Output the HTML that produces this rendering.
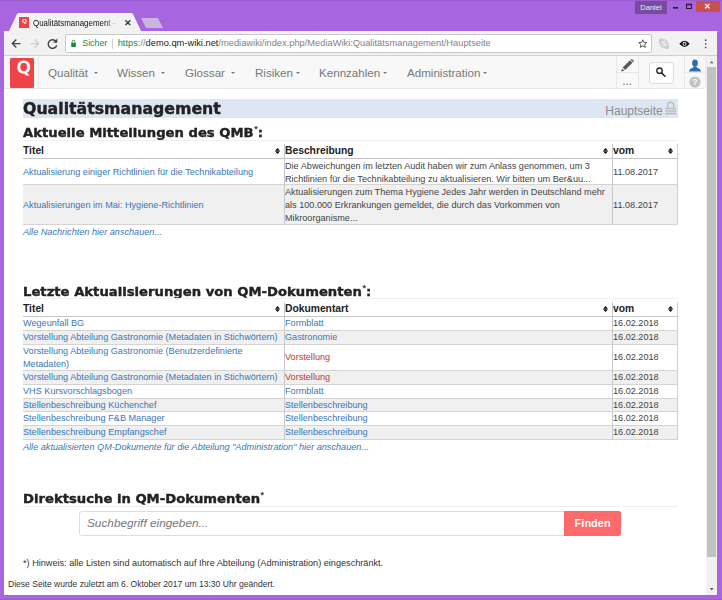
<!DOCTYPE html>
<html lang="de"><head><meta charset="utf-8"><title>Qualitätsmanagement</title>
<style>
*{box-sizing:border-box;margin:0;padding:0}
html,body{width:722px;height:600px;overflow:hidden;background:#a865e0;font-family:"Liberation Sans",sans-serif}
#win,#win>*,#page>*,#pg>*{position:absolute}
#win{position:absolute;left:0;top:0;width:722px;height:600px;background:#a865e0;overflow:hidden}
#topedge{left:0;top:0;width:722px;height:1px;background:#9a5ccf}
#tab{left:0;top:0}
#tabtitle{left:33px;top:16.500px;font-size:9px;color:#111;white-space:nowrap;line-height:12px;width:97px;overflow:hidden;transform:scaleX(0.880);transform-origin:0 50%;-webkit-mask-image:linear-gradient(90deg,#000 85%,transparent 98%)}
#tabx{left:123.500px;top:16px;font-size:8.500px;color:#333;line-height:14px;font-weight:bold}
#user{left:635px;top:1px;width:32px;height:13px;background:#7a4a9e;color:#eee;font-size:7.500px;line-height:13px;text-align:center}
#close{left:696px;top:1px;width:23.500px;height:11px;background:#c9504f;color:#fff;font-size:7.500px;line-height:11.500px;text-align:center;font-weight:bold}
#toolbar{left:4px;top:31px;width:713.300px;height:25px;background:#f2f2f2;border-bottom:1px solid #d0d0d0}
#omni{left:64.500px;top:34px;width:587.500px;height:19px;background:#fff;border:1px solid #c8c8c8;border-radius:2px}
#url{left:82.300px;top:37.300px;font-size:9.300px;line-height:13px;white-space:nowrap;color:#828282;transform-origin:0 50%}
#page{left:4px;top:56px;width:713.300px;height:539px;background:#fff;overflow:hidden}
/* inside page coordinates are relative to window via offset wrapper */
#pg{left:-4px;top:-56px;width:722px;height:600px}
#nav{left:4px;top:56px;width:701.500px;height:33px;border-radius:0 0 3px 0;border-right:1px solid #eee;background:#f8f8f8;border-bottom:1px solid #e7e7e7}
#logo{left:10px;top:58.300px;width:23.700px;height:29.400px;background:#ee4449;border-radius:1.300px}
.ni{top:66px;font-size:11.6px;line-height:14px;color:#777;white-space:nowrap}
.caret{display:inline-block;width:0;height:0;border-left:2.700px solid transparent;border-right:2.700px solid transparent;border-top:2.800px solid #777;vertical-align:middle;margin-left:2.500px;position:relative;top:-1px}
.vd{top:56px;width:1px;height:33px;background:#e7e7e7}
.hd{height:1px;background:#e7e7e7;top:72px}
#sbtn{left:648.500px;top:62px;width:25px;height:22px;background:#fff;border:1px solid #ddd;border-radius:3px}
#h1bar{left:23px;top:99px;width:655px;height:19px;background:#dee6f3}
.hb{font-family:"DejaVu Sans","Liberation Sans",sans-serif;font-weight:bold;color:#222;white-space:nowrap;-webkit-text-stroke:0.4px #222;transform-origin:0 50%}
#h1{left:23px;top:99.500px;font-size:15.3px;line-height:19px;transform:scaleX(1.03)}
.h2{left:23px;font-size:12.8px;line-height:16px;transform:scaleX(1.03)}
.h2 sup{font-size:9px;vertical-align:top;line-height:8px;font-family:"Liberation Sans",sans-serif;font-weight:normal;-webkit-text-stroke:0.15px #222;margin-left:0.500px}
#haupt{left:605.300px;top:104.200px;font-size:12px;line-height:14px;color:#8c8c8c;white-space:nowrap}
table{border-collapse:separate;border-spacing:0;font-size:9.130px;color:#444;table-layout:fixed}
th{font-size:10.300px;font-weight:bold;color:#222;text-align:left;height:15px;border-bottom:1px solid #c4c4c4;border-right:1px solid #c8c8c8;padding:0 0 0.500px 0;vertical-align:middle;position:relative;line-height:12px}
td{border-bottom:1px solid #d4d4d4;border-right:1px solid #c8c8c8;padding:0;vertical-align:middle;line-height:12.500px;white-space:nowrap}
th:last-child,td:last-child{border-right-color:#d0d0d0}
#t1 td{line-height:13px}
#t1 td>a,#t1 td>span,#t1 td>div{position:relative;top:1px}
tr[style*="line-height:12px"] td{line-height:12px}
tr.alt td{background:#f0f0f0}
.srt{position:absolute;right:4px;top:4px;width:5px;height:6px}
svg text{font-family:"Liberation Sans",sans-serif}
a{color:#3a76b5;text-decoration:none}
.red{color:#c0392b}
.it{left:23px;font-size:9.15px;font-style:italic;color:#3a76b5;white-space:nowrap;line-height:12px}
#inp{left:79px;top:511px;width:486px;height:25px;border:1px solid #ddd;border-radius:3px 0 0 3px;background:#fff}
#ph{left:87px;top:516px;font-size:11.8px;font-style:italic;color:#777;line-height:14px;white-space:nowrap}
#btn{left:564px;top:511px;width:57.300px;height:25px;background:#fe6a6b;border-radius:0 2px 2px 0;color:#fff;font-weight:bold;font-size:11px;line-height:25px;text-align:center}
.sm{font-size:9.15px;color:#333;white-space:nowrap;line-height:12px}
#sb{left:705.500px;top:56px;width:12px;height:539px;background:#f1f1f1}
#thumb{left:707px;top:67px;width:8.500px;height:490px;background:#c1c1c1}
</style></head><body>
<div id="win" class="abs">
<div id="topedge"></div><div style="left:0;top:599px;width:722px;height:1px;background:#9a5ccf"></div>
<svg id="tab" width="722" height="60" viewBox="0 0 722 60">
<path d="M4 31.5 L9 31 L17 14 Q17.5 13 19 13 L131 13 Q132.5 13 133 14 L141 31 L717.3 31 L717.3 32 L4 32 Z" fill="#f2f2f2"/>
<path d="M141 18 L158 18 L163 28 L146 28 Z" fill="#c9b6de"/>
<rect x="19" y="17" width="10" height="11" fill="#ee4449"/>
<text x="24.500" y="23.400" font-weight="bold" font-size="5.800" fill="#fff" text-anchor="middle">Q</text>
<path d="M673 7.800h5" stroke="#2a1a3a" stroke-width="1.600" fill="none"/>
<rect x="686.5" y="4.500" width="5" height="4" stroke="#2a1a3a" stroke-width="1" fill="none"/>
<path d="M686 4.500h6" stroke="#2a1a3a" stroke-width="1.600"/>
</svg>
<div id="tabtitle">Qualitätsmanagement – Q</div>
<div id="tabx">✕</div>
<div id="user">Daniel</div>
<div id="close">✕</div>
<div id="toolbar"></div>
<div id="omni"></div>
<div id="url"><span style="color:#1a8a3a;display:inline-block;width:35.400px;font-size:8.800px">Sicher</span><span style="color:#1a8a3a">https</span>://<span style="color:#222">demo.qm-wiki.net</span>/mediawiki/index.php/MediaWiki:Qualitätsmanagement/Hauptseite</div>
<svg id="ticons" width="722" height="60" viewBox="0 0 722 60" style="left:0;top:0">
<g fill="none" stroke="#444" stroke-width="1.400">
<path d="M20.500 43.600H12.500M16.300 39.600l-4 4 4 4"/>
<path d="M30.500 43.600H38.500M34.700 39.600l4 4-4 4" stroke="#ccc"/>
<path d="M56 41.500A4.300 4.300 0 1 0 56.700 45.200"/>
</g>
<path d="M57.300 38.600v4.200h-4.200z" fill="#444"/>
<path d="M71.200 42.800h4.600v4.200h-4.600z" fill="#1a8a3a"/>
<path d="M72.200 42.800v-1.200a1.300 1.300 0 0 1 2.600 0v1.200" fill="none" stroke="#1a8a3a" stroke-width="0.900"/>
<path d="M112.500 38.700v10" stroke="#ccc" stroke-width="1"/>
<path d="M642.800 39.800l1.150 2.550 2.800.3-2.100 1.900.6 2.750-2.450-1.400-2.450 1.400.6-2.750-2.100-1.900 2.800-.3z" fill="none" stroke="#444" stroke-width="0.900" stroke-linejoin="round"/>
<g fill="#cfcfcf"><circle cx="664" cy="43.600" r="4.300"/><circle cx="661.300" cy="40.800" r="2.600"/><circle cx="666.700" cy="46.400" r="2.600"/></g>
<text x="664" y="46.300" font-weight="bold" font-size="7.500" fill="#f2f2f2" text-anchor="middle">S</text>
<path d="M679.300 43.800Q684.500 37.600 689.700 43.800Q684.500 50 679.300 43.800Z" fill="#111"/>
<circle cx="684.500" cy="43.800" r="2" fill="#f2f2f2"/><circle cx="684.500" cy="43.800" r="1.100" fill="#111"/>
<g fill="#555"><circle cx="705.700" cy="40.200" r="0.900"/><circle cx="705.700" cy="43.800" r="0.900"/><circle cx="705.700" cy="47.400" r="0.900"/></g>
</svg>
<div id="page"><div id="pg">
<div id="nav"></div>
<div id="logo"></div><div class="vd" style="left:38px"></div>
<div class="ni" style="left:48px">Qualität <i class="caret"></i></div>
<div class="ni" style="left:117px">Wissen <i class="caret"></i></div>
<div class="ni" style="left:185px">Glossar <i class="caret"></i></div>
<div class="ni" style="left:255px">Risiken<i class="caret"></i></div>
<div class="ni" style="left:319px">Kennzahlen<i class="caret"></i></div>
<div class="ni" style="left:407px">Administration<i class="caret"></i></div>
<div class="vd" style="left:616px"></div><div class="vd" style="left:638px"></div><div class="vd" style="left:684px"></div>
<div class="hd" style="left:616px;width:22px"></div><div class="hd" style="left:684px;width:23px"></div>
<div id="sbtn"></div>
<div id="h1bar"></div>
<svg id="nicons" class="ov" width="722" height="130" viewBox="0 0 722 130" style="left:0;top:0">
<text x="0" y="0" transform="translate(23.850 73.200) scale(1.100 1)" font-weight="normal" font-size="15.600" fill="#fff" stroke="#fff" stroke-width="0.900" text-anchor="middle" style="font-family:'DejaVu Sans',sans-serif">Q</text>
<g fill="#5a5a5a"><path d="M621.300 71.500l0.700-3.100 2.400 2.400z"/><path d="M622.700 67.600l7.300-7.300 2.500 2.500-7.300 7.300z"/><path d="M630.700 59.700l0.500-0.500q0.500-0.400 1 0l1.500 1.500q0.400 0.500 0 1l-0.500 0.500z"/></g>
<g fill="#777"><circle cx="624" cy="84.300" r="0.800"/><circle cx="627.200" cy="84.300" r="0.800"/><circle cx="630.400" cy="84.300" r="0.800"/></g>
<circle cx="659.500" cy="70.700" r="2.700" fill="none" stroke="#222" stroke-width="1.300"/><path d="M661.700 73l3.200 3.200" stroke="#222" stroke-width="1.600" stroke-linecap="round"/>
<g fill="#2a6eb0"><ellipse cx="695" cy="63" rx="2.900" ry="3.500"/><path d="M689 71.600q0-2.600 3.600-3.600l1.200-1.800h2.400l1.200 1.800q3.600 1 3.600 3.600z"/></g>
<circle cx="695" cy="82" r="5.600" fill="#c2c2c2"/>
<text x="695" y="85.400" font-weight="bold" font-size="9.500" fill="#f8f8f8" text-anchor="middle">?</text>
<g fill="none" stroke="#bdbdbd"><path d="M667.700 107.500v-2.300a3 3 0 0 1 6 0v2.300" stroke-width="1.400"/><path d="M665.300 108.500h10.800M665.300 111h10.800M665.300 113.600h10.800" stroke-width="1.700"/></g>
</svg>
<div id="h1" class="hb">Qualitätsmanagement</div>
<div id="haupt">Hauptseite</div>
<div class="h2 hb" style="top:125px">Aktuelle Mitteilungen des QMB<sup>*</sup>:</div>
<div style="left:23px;top:140px;width:655px;height:1px;background:#f0f0f0"></div>
<table id="t1" style="left:23px;top:144px;width:655px">
<colgroup><col style="width:262px"><col style="width:328px"><col style="width:65px"></colgroup>
<tr><th>Titel<svg class="srt" viewBox="0 0 5 6"><path d="M0 2.700L2.500 0L5 2.700ZM0 3.300L2.500 6L5 3.300Z" fill="#111"/></svg></th><th>Beschreibung<svg class="srt" viewBox="0 0 5 6"><path d="M0 2.700L2.500 0L5 2.700ZM0 3.300L2.500 6L5 3.300Z" fill="#111"/></svg></th><th>vom<svg class="srt" viewBox="0 0 5 6"><path d="M0 2.700L2.500 0L5 2.700ZM0 3.300L2.500 6L5 3.300Z" fill="#111"/></svg></th></tr>
<tr style="height:26px"><td><a>Aktualisierung einiger Richtlinien für die Technikabteilung</a></td><td><div style="height:25px;position:relative;top:0.500px">Die Abweichungen im letzten Audit haben wir zum Anlass genommen, um 3<br>Richtlinien für die Technikabteilung zu aktualisieren. Wir bitten um Ber&amp;uu...</div></td><td><span>11.08.2017</span></td></tr>
<tr class="alt" style="height:40px"><td><a>Aktualisierungen im Mai: Hygiene-Richtlinien</a></td><td><div>Aktualisierungen zum Thema Hygiene Jedes Jahr werden in Deutschland mehr<br>als 100.000 Erkrankungen gemeldet, die durch das Vorkommen von<br>Mikroorganisme...</div></td><td><span>11.08.2017</span></td></tr>
</table>
<div class="it" style="top:226px">Alle Nachrichten hier anschauen...</div>
<div class="h2 hb" style="top:284px">Letzte Aktualisierungen von QM-Dokumenten<sup>*</sup>:</div>
<div style="left:23px;top:298px;width:655px;height:1px;background:#f0f0f0"></div>
<table id="t2" style="left:23px;top:302px;width:655px">
<colgroup><col style="width:262px"><col style="width:328px"><col style="width:65px"></colgroup>
<tr><th>Titel<svg class="srt" viewBox="0 0 5 6"><path d="M0 2.700L2.500 0L5 2.700ZM0 3.300L2.500 6L5 3.300Z" fill="#111"/></svg></th><th>Dokumentart<svg class="srt" viewBox="0 0 5 6"><path d="M0 2.700L2.500 0L5 2.700ZM0 3.300L2.500 6L5 3.300Z" fill="#111"/></svg></th><th>vom<svg class="srt" viewBox="0 0 5 6"><path d="M0 2.700L2.500 0L5 2.700ZM0 3.300L2.500 6L5 3.300Z" fill="#111"/></svg></th></tr>
<tr style="height:14px"><td><a>Wegeunfall BG</a></td><td><a>Formblatt</a></td><td>16.02.2018</td></tr>
<tr class="alt" style="height:14px"><td><a>Vorstellung Abteilung Gastronomie (Metadaten in Stichwörtern)</a></td><td><a>Gastronomie</a></td><td>16.02.2018</td></tr>
<tr style="height:26px"><td><a>Vorstellung Abteilung Gastronomie (Benutzerdefinierte<br>Metadaten)</a></td><td><a class="red">Vorstellung</a></td><td>16.02.2018</td></tr>
<tr class="alt" style="height:14px"><td><a>Vorstellung Abteilung Gastronomie (Metadaten in Stichwörtern)</a></td><td><a class="red">Vorstellung</a></td><td>16.02.2018</td></tr>
<tr style="height:14px"><td><a>VHS Kursvorschlagsbogen</a></td><td><a>Formblatt</a></td><td>16.02.2018</td></tr>
<tr class="alt" style="height:13px;line-height:12px"><td><a>Stellenbeschreibung Küchenchef</a></td><td><a>Stellenbeschreibung</a></td><td>16.02.2018</td></tr>
<tr style="height:14px"><td><a>Stellenbeschreibung F&amp;B Manager</a></td><td><a>Stellenbeschreibung</a></td><td>16.02.2018</td></tr>
<tr class="alt" style="height:14px"><td><a>Stellenbeschreibung Empfangschef</a></td><td><a>Stellenbeschreibung</a></td><td>16.02.2018</td></tr>
</table>
<div class="it" style="top:441px">Alle aktualisierten QM-Dokumente für die Abteilung "Administration" hier anschauen...</div>
<div class="h2 hb" style="top:491px">Direktsuche in QM-Dokumenten<sup>*</sup></div>
<div style="left:23px;top:506px;width:655px;height:1px;background:#eee"></div>
<div id="inp"></div><div id="ph">Suchbegriff eingeben...</div>
<div id="btn">Finden</div>
<div class="sm" style="left:23px;top:556.500px">*) Hinweis: alle Listen sind automatisch auf Ihre Abteilung (Administration) eingeschränkt.</div>
<div class="sm" style="left:8px;top:577.500px;font-size:8.550px">Diese Seite wurde zuletzt am 6. Oktober 2017 um 13:30 Uhr geändert.</div>
<div id="sb"></div><div id="thumb"></div>
<svg width="12" height="540" viewBox="0 0 12 540" style="left:705.500px;top:56px"><path d="M3.700 7.200l2-2.200 2 2.200z" fill="#666"/><path d="M3.700 532l2 2.200 2-2.200z" fill="#555"/></svg>
</div></div>
</div>
</body></html>
